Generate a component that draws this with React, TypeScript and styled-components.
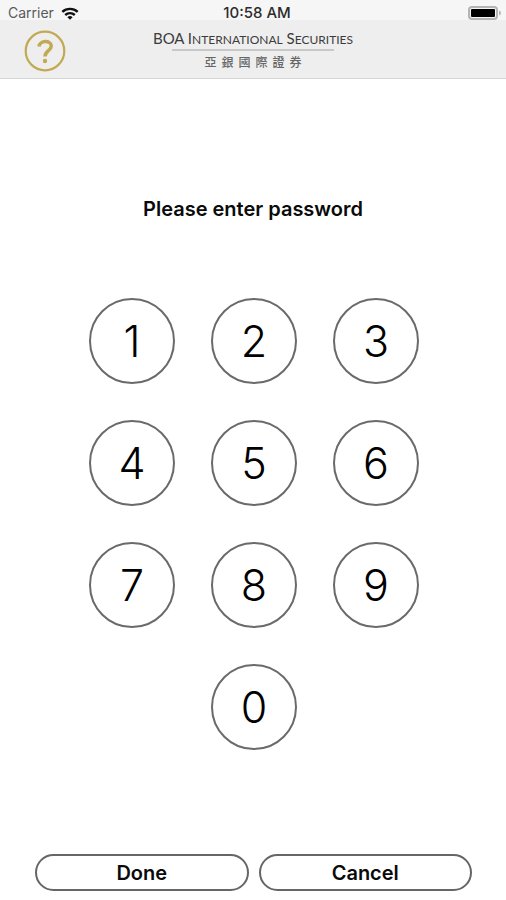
import React from "react";
import styled, { createGlobalStyle } from "styled-components";

const Global = createGlobalStyle`
  *, *::before, *::after { box-sizing: border-box; }
  body { margin: 0; background: #fff; color: #000; font-family: Inter, "Liberation Sans", sans-serif; }
`;

const Screen = styled.main`
  min-height: 100vh;
  display: flex;
  flex-direction: column;
`;

const Header = styled.header`
  background: #eeeeee;
  border-bottom: 1px solid #d6d6d6;
`;

const StatusBar = styled.div`
  display: grid;
  grid-template-columns: 1fr auto 1fr;
  align-items: center;
  height: 20px;
  padding: 6px 4px 0 8px;
  background: #f6f6f6;
  line-height: 14px;
  color: #2c2c2c;
`;

const Carrier = styled.span`
  display: flex;
  align-items: center;
  gap: 7px;
  font-size: 14px;
  color: #5a5a5a;
`;

const Clock = styled.time`
  padding-left: 4px;
  font-size: 15px;
  font-weight: 500;
`;

const Battery = styled.svg`
  justify-self: end;
`;

const NavBar = styled.div`
  display: grid;
  grid-template-columns: 1fr auto 1fr;
  align-items: start;
  height: 58px;
  padding: 7px 24px 0;
`;

const HelpButton = styled.button`
  display: block;
  width: 42px;
  height: 42px;
  margin-top: 3px;
  padding: 0;
  border: 0;
  background: none;
`;

const Brand = styled.div`
  display: flex;
  flex-direction: column;
  align-items: center;
`;

const BrandName = styled.h1`
  margin: 0;
  font-family: Lato, sans-serif;
  font-weight: 400;
  font-size: 15px;
  line-height: 22px;
  color: #3c3c3c;
`;

const SmallCaps = styled.span`
  font-size: 12px;
  line-height: 12px;
  text-transform: uppercase;
`;

const BrandRule = styled.hr`
  width: 162px;
  margin: 0;
  border: 0;
  border-top: 2px solid #c8c8c8;
`;

const BrandChinese = styled.p`
  margin: 0;
  padding-left: 5px;
  font-family: "Noto Sans CJK TC", sans-serif;
  font-size: 12px;
  font-weight: 500;
  line-height: 22px;
  letter-spacing: 5px;
  color: #666;
`;

const Prompt = styled.h2`
  margin: 117px 0 0;
  text-align: center;
  font-size: 20px;
  line-height: 26px;
  font-weight: 600;
  color: #0a0a0a;
`;

const Keypad = styled.div`
  display: grid;
  grid-template-columns: repeat(3, 86px);
  justify-content: center;
  gap: 36px;
  margin: 76px 0 auto;
  padding-left: 2px;
`;

const Key = styled.button<{ $center?: boolean }>`
  width: 86px;
  height: 86px;
  padding: 0;
  border: 2px solid #6a6a6a;
  border-radius: 50%;
  background: #fff;
  color: #000;
  font-family: Inter, sans-serif;
  font-size: 43px;
  font-weight: 300;
  grid-column: ${(p) => (p.$center ? "2" : "auto")};
`;

const Actions = styled.footer`
  display: grid;
  grid-template-columns: 1fr 1fr;
  gap: 10px;
  padding: 0 34px 9px 35px;
`;

const Action = styled.button`
  height: 37px;
  border: 2px solid #666;
  border-radius: 19px;
  background: #fff;
  color: #0a0a0a;
  font-family: Inter, sans-serif;
  font-size: 20px;
  font-weight: 600;
`;

const digits = ["1", "2", "3", "4", "5", "6", "7", "8", "9", "0"];

export default function App() {
  return (
    <Screen>
      <Global />
      <Header>
        <StatusBar>
          <Carrier>
            Carrier
            <svg width="18" height="13" viewBox="0 0 18 13" fill="none" stroke="#111" strokeWidth="2.4" aria-hidden="true">
              <path d="M1.300 4.800a11.500 11.500 0 0 1 15.400 0M4.200 8a7.200 7.200 0 0 1 9.600 0" />
              <path d="M9 12.800 6.400 10.200a4 4 0 0 1 5.200 0z" fill="#111" stroke="none" />
            </svg>
          </Carrier>
          <Clock>10:58 AM</Clock>
          <Battery width="34" height="14" viewBox="0 0 34 14" role="img" aria-label="Battery full">
            <rect x="1" y="1" width="28" height="12" rx="3" fill="#f6f6f6" stroke="#b4b4b4" strokeWidth="2" />
            <rect x="3" y="3" width="24" height="8" rx="1" fill="#000" />
            <path d="M31 4.500q2 .8 2 2.500t-2 2.500z" fill="#b4b4b4" />
          </Battery>
        </StatusBar>
        <NavBar>
          <HelpButton type="button" aria-label="Help">
            <svg width="42" height="42" viewBox="0 0 42 42" fill="none" stroke="#c2aa55" aria-hidden="true">
              <circle cx="21" cy="21" r="19.300" strokeWidth="2.200" />
              <path d="M15 16.500c.5-6.500 12.300-6.500 12.300-.5 0 4.500-6.300 5-6.300 10.500" strokeWidth="3.500" />
              <circle cx="21" cy="31" r="2.200" fill="#c2aa55" stroke="none" />
            </svg>
          </HelpButton>
          <Brand>
            <BrandName>
              BOA I<SmallCaps>nternational</SmallCaps> S<SmallCaps>ecurities</SmallCaps>
            </BrandName>
            <BrandRule />
            <BrandChinese lang="zh-Hant">亞銀國際證券</BrandChinese>
          </Brand>
        </NavBar>
      </Header>
      <Prompt>Please enter password</Prompt>
      <Keypad>
        {digits.map((d) => (
          <Key key={d} type="button" $center={d === "0"}>{d}</Key>
        ))}
      </Keypad>
      <Actions>
        <Action type="button">Done</Action>
        <Action type="button">Cancel</Action>
      </Actions>
    </Screen>
  );
}
